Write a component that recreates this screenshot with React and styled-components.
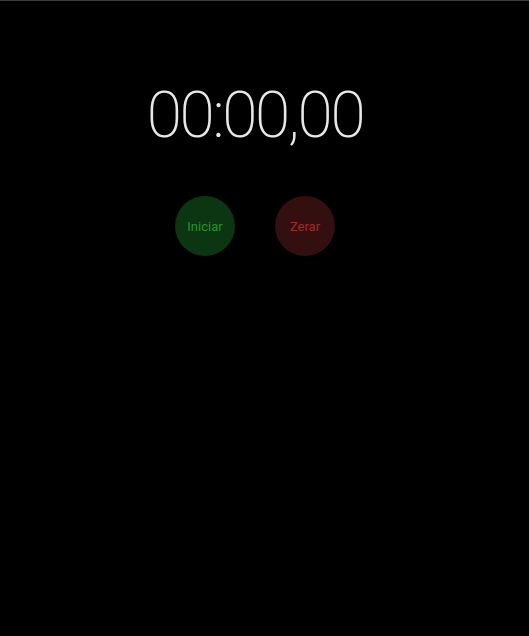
import React, { useState, useEffect, useRef } from 'react'
import styled, { createGlobalStyle } from 'styled-components'

const GlobalStyle = createGlobalStyle`
  html, body {
    margin: 0;
    padding: 0;
    background: #000;
    height: 100%;
  }
  #root {
    min-height: 100%;
  }
`

const Page = styled.div`
  min-height: 636px;
  box-sizing: border-box;
  background: #000;
  border-top: 1px solid #3a3a3a;
  display: flex;
  flex-direction: column;
  align-items: center;
  padding-top: 77px;
  padding-right: 19px;
  font-family: Roboto, 'Liberation Sans', sans-serif;
`

const Display = styled.div`
  color: #e8e8e8;
  font-size: 64px;
  font-weight: 200;
  letter-spacing: -2.4px;
  line-height: 75px;
`

const Controls = styled.div`
  display: flex;
  gap: 40px;
  margin-top: 43px;
`

const RoundButton = styled.button`
  width: 60px;
  height: 60px;
  border-radius: 50%;
  border: none;
  padding: 0;
  font-family: Roboto, 'Liberation Sans', sans-serif;
  font-size: 13px;
  cursor: pointer;
  background: ${p => (p.$variant === 'start' ? '#0c3511' : '#330f0f')};
  color: ${p => (p.$variant === 'start' ? '#21962b' : '#a12a2a')};
`

const pad = n => String(n).padStart(2, '0')

const App = () => {
  const [elapsed, setElapsed] = useState(0)
  const [running, setRunning] = useState(false)
  const timer = useRef(null)

  useEffect(() => {
    if (!running) return
    const start = Date.now() - elapsed
    timer.current = setInterval(() => setElapsed(Date.now() - start), 10)
    return () => clearInterval(timer.current)
  }, [running])

  const min = Math.floor(elapsed / 60000)
  const sec = Math.floor((elapsed % 60000) / 1000)
  const cs = Math.floor((elapsed % 1000) / 10)

  return (
    <Page>
      <GlobalStyle />
      <Display>{pad(min)}:{pad(sec)},{pad(cs)}</Display>
      <Controls>
        <RoundButton $variant="start" onClick={() => setRunning(r => !r)}>
          {running ? 'Parar' : 'Iniciar'}
        </RoundButton>
        <RoundButton $variant="reset" onClick={() => { setRunning(false); setElapsed(0) }}>
          Zerar
        </RoundButton>
      </Controls>
    </Page>
  )
}

export default App
